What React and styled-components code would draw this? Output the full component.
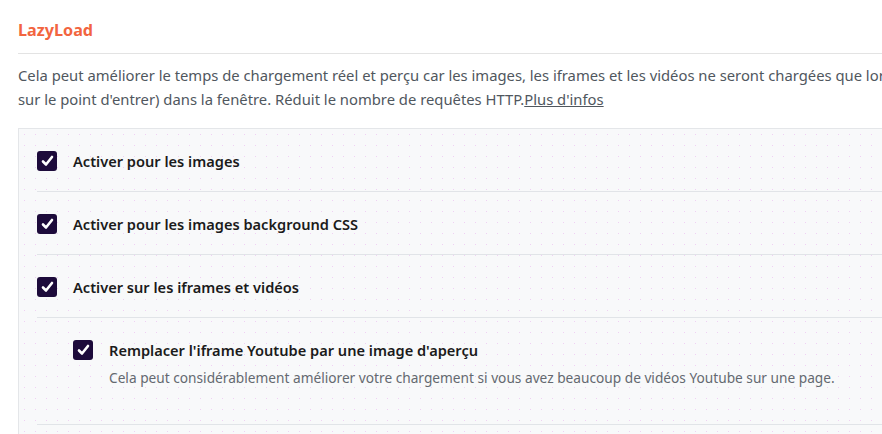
import React from "react";
import styled, { createGlobalStyle } from "styled-components";

const Global = createGlobalStyle`
  html, body { margin: 0; padding: 0; background: #fff; }
  body { font-family: "Noto Sans", "Open Sans", sans-serif; overflow: hidden; }
`;

const Page = styled.div`
  width: 960px;
  padding: 18px 0 0 18px;
`;

const Title = styled.h2`
  margin: 0;
  font-size: 16.2px;
  line-height: 24px;
  font-weight: 700;
  color: #f2653f;
  padding-bottom: 11px;
  border-bottom: 1px solid #e3e3e3;
`;

const Intro = styled.p`
  margin: 9px 0 0;
  font-size: 14.8px;
  line-height: 24px;
  color: #50575e;
  white-space: nowrap;
`;

const Link = styled.a`
  color: #50575e;
  text-decoration: underline;
`;

const Box = styled.div`
  margin-top: 17px;
  background-color: #f8f9fa;
  background-image: radial-gradient(circle, rgba(230, 170, 235, 0.5) 0.7px, transparent 1px);
  background-size: 11px 11px;
  border: 1px solid #e4e6e9;
  padding: 0 0 20px 18px;
`;

const Row = styled.div`
  display: flex;
  align-items: flex-start;
  gap: 16px;
  padding: ${(p) => (p.$nested ? "21px 0 35px 36px" : "21px 0 19px")};
  border-bottom: 1px solid #e1e4e8;
`;

const Check = styled.span`
  flex: none;
  width: 20px;
  height: 20px;
  margin-top: 1px;
  border-radius: 3px;
  background: #1d0b3b;
  display: flex;
  align-items: center;
  justify-content: center;
`;

const Text = styled.div`
  display: flex;
  flex-direction: column;
  gap: 6px;
`;

const Label = styled.span`
  font-size: 14.6px;
  line-height: 22px;
  font-weight: 600;
  color: #1b1b1b;
  white-space: nowrap;
`;

const Help = styled.span`
  font-size: 13.7px;
  line-height: 22px;
  color: #646970;
  white-space: nowrap;
`;

const Tick = () => (
  <svg width="13" height="12" viewBox="0 0 13 12">
    <path d="M2 6.5 L5 9.5 L11 2" fill="none" stroke="#fff" strokeWidth="2.6" strokeLinecap="round" strokeLinejoin="round" />
  </svg>
);

const Option = ({ label, help, nested }) => (
  <Row $nested={nested}>
    <Check><Tick /></Check>
    <Text>
      <Label>{label}</Label>
      {help && <Help>{help}</Help>}
    </Text>
  </Row>
);

export default function App() {
  return (
    <>
      <Global />
      <Page>
        <Title>LazyLoad</Title>
        <Intro>
          Cela peut améliorer le temps de chargement réel et perçu car les images, les iframes et les vidéos ne seront chargées que lorsque leur contenu est visible (ou
          <br />
          sur le point d'entrer) dans la fenêtre. Réduit le nombre de requêtes HTTP.<Link href="#">Plus d'infos</Link>
        </Intro>
        <Box>
          <Option label="Activer pour les images" />
          <Option label="Activer pour les images background CSS" />
          <Option label="Activer sur les iframes et vidéos" />
          <Option
            nested
            label="Remplacer l'iframe Youtube par une image d'aperçu"
            help="Cela peut considérablement améliorer votre chargement si vous avez beaucoup de vidéos Youtube sur une page."
          />
        </Box>
      </Page>
    </>
  );
}
